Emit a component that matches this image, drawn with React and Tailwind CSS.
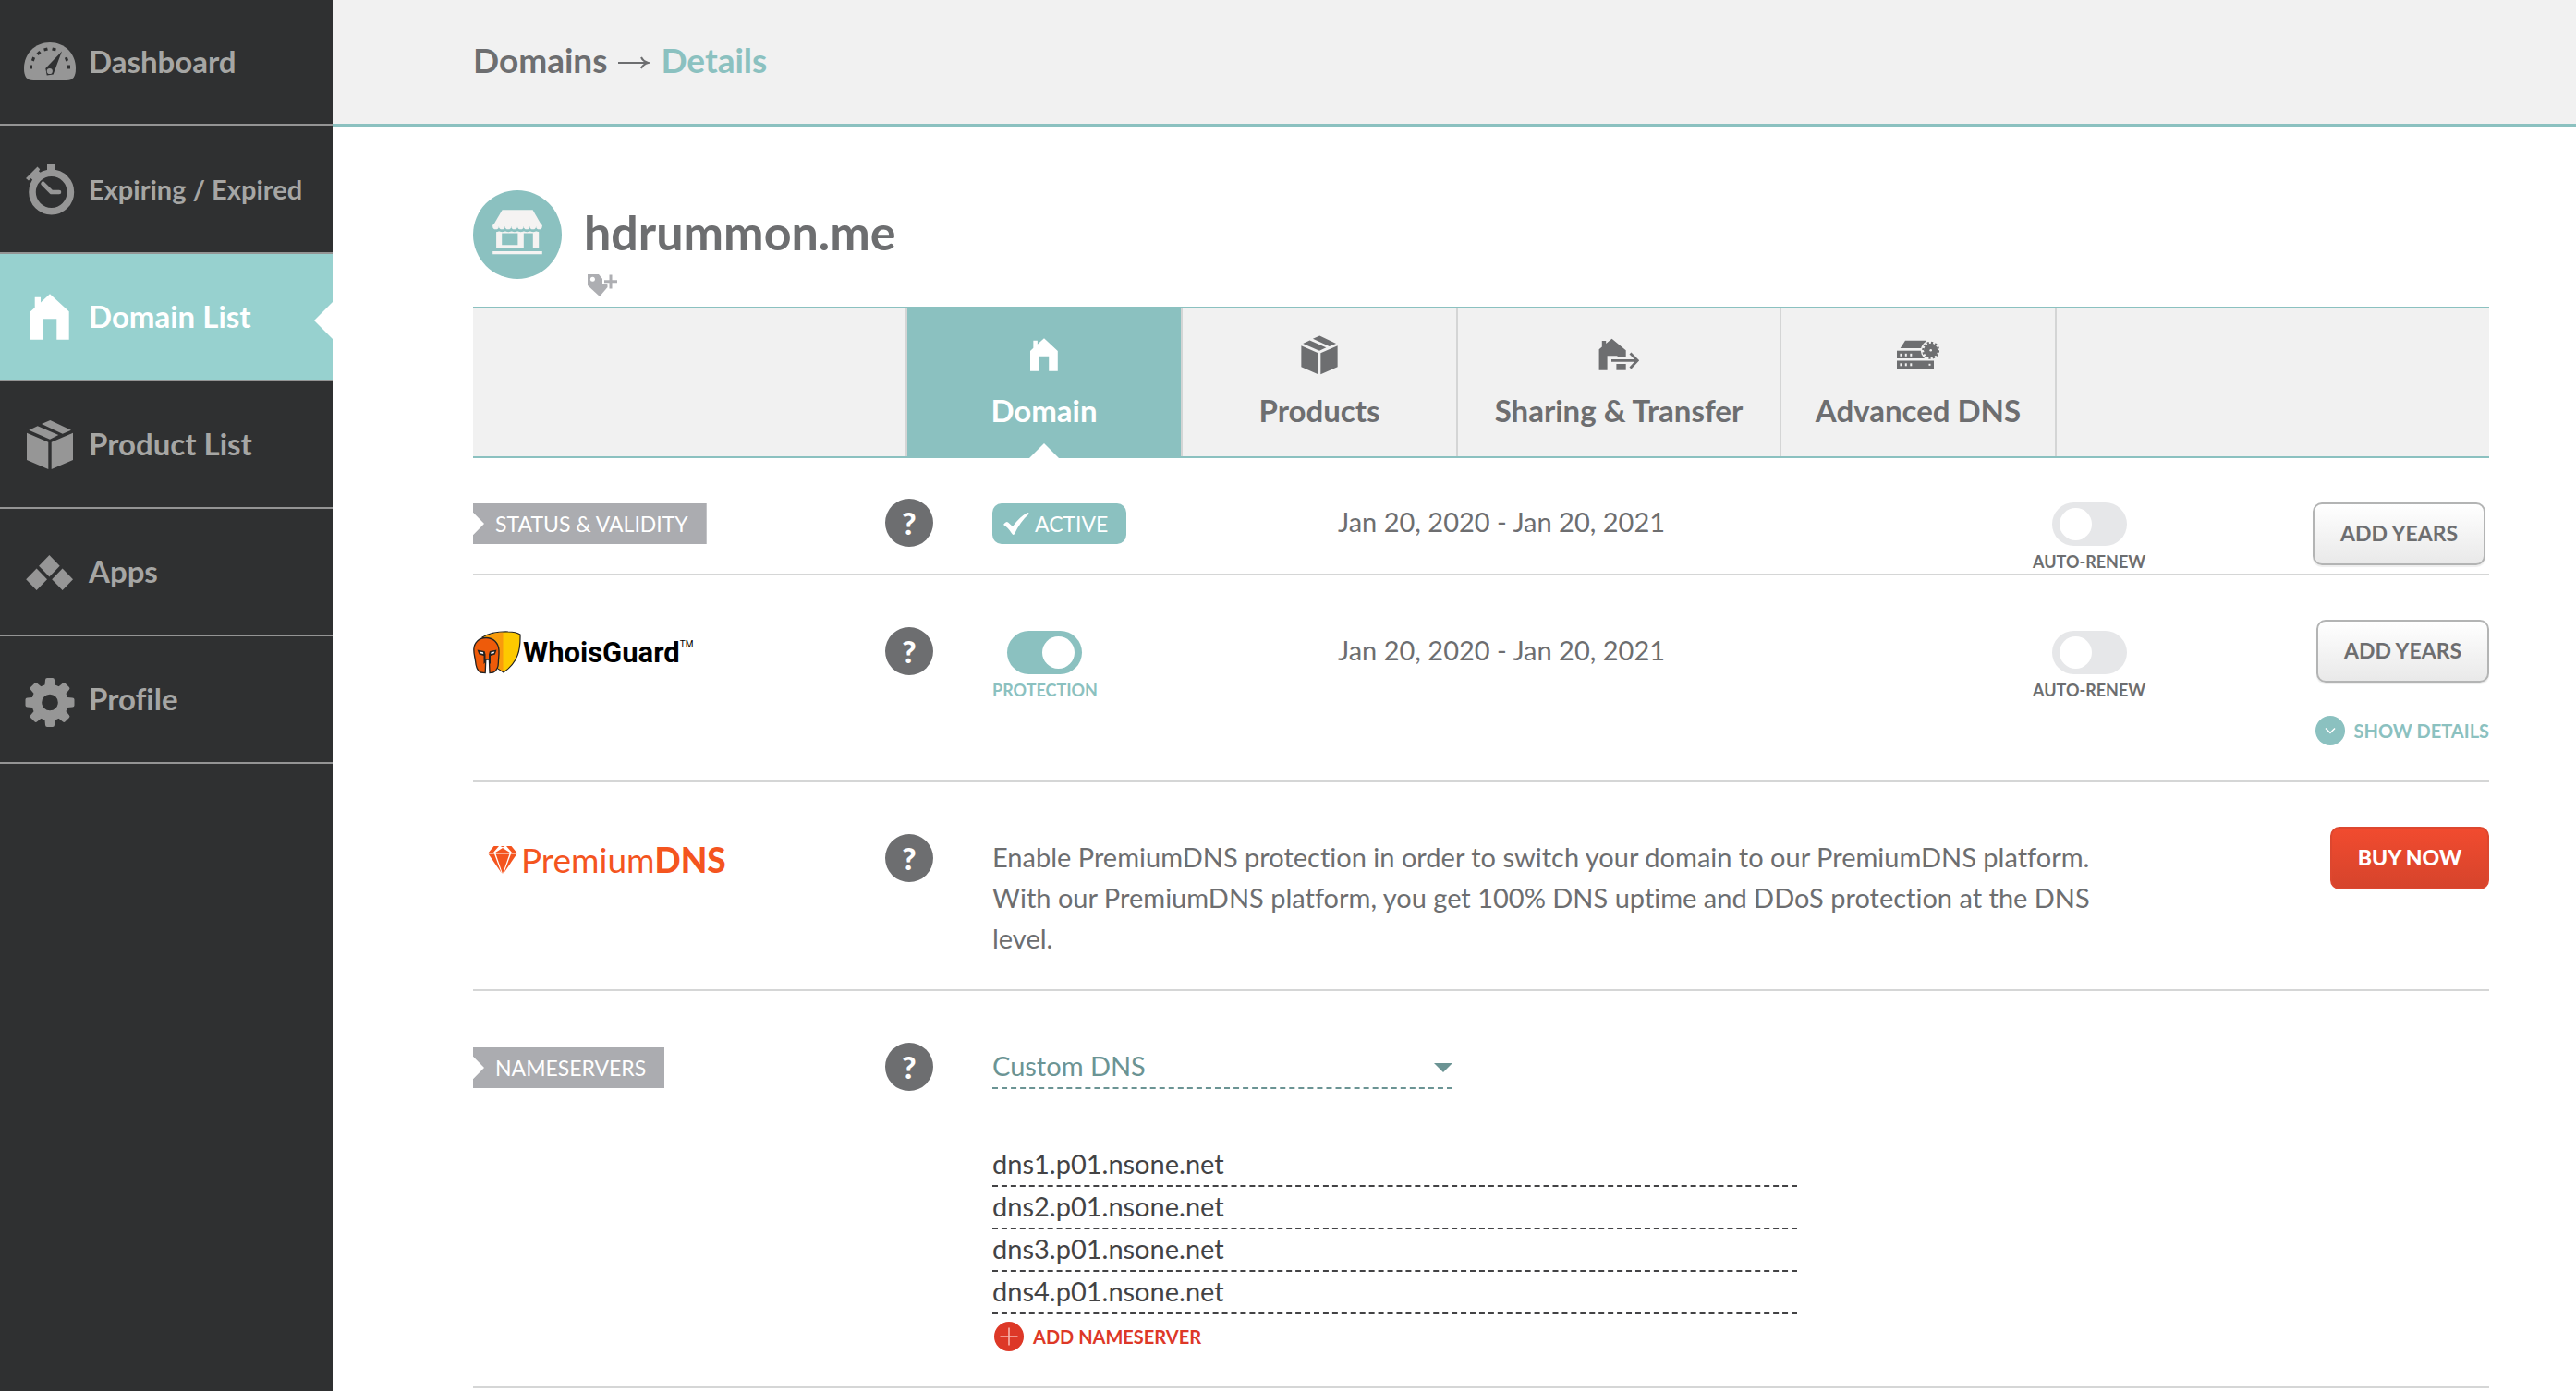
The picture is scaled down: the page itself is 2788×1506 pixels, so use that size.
import React, { useState } from "react";

function DashboardIcon() {
  const ticks = [
    [7.5, 33.5, 0],
    [10, 25, 20],
    [16, 18.5, 45],
    [23.5, 14.5, 75],
    [32.5, 14.5, 105],
    [46, 25, 160],
    [48.5, 33.5, 0],
  ];
  return (
    <svg viewBox="0 0 56 56" className="size-14 shrink-0 overflow-visible" aria-hidden="true">
      <path d="M0 35C0 19 12 7 28 7s28 12 28 28c0 9-3 13-10 13H10C3 48 0 44 0 35Z" fill="currentColor" />
      {ticks.map(([x, y, r]) => (
        <rect key={x} x={x - 1.5} y={y - 2} width="3" height="4" transform={`rotate(${r} ${x} ${y})`} fill="#2f3031" />
      ))}
      <path d="M41 16.5 33.3 37l-1.6 4.5-7 1-1.4-7.5Z" fill="#2f3031" />
      <circle cx="27.8" cy="38" r="3.1" fill="currentColor" />
    </svg>
  );
}

function StopwatchIcon() {
  return (
    <svg viewBox="0 0 56 56" className="size-14 shrink-0 overflow-visible" aria-hidden="true">
      <circle cx="29.7" cy="31" r="20.7" fill="none" stroke="currentColor" strokeWidth="7.6" />
      <path d="M25 1h9v9h-9Z" fill="currentColor" />
      <path d="M2 16 14.5 3.5l2.7 2.7-1.2 2.3 4 3-9 8L7.5 16 5 18.5Z" fill="currentColor" />
      <path d="M20.5 21.8 29.7 31H38" fill="none" stroke="currentColor" strokeWidth="4.6" strokeLinecap="round" strokeLinejoin="round" />
    </svg>
  );
}

function HomeIcon({ className }) {
  return (
    <svg viewBox="0 0 56 56" className={className} aria-hidden="true">
      <path d="M28 3.3 48.7 22.3V52.7H35.3V30.3H20.7V52.7H7V22.3L11.7 18V6.7H18V12.4Z" fill="currentColor" />
    </svg>
  );
}

function BoxIcon({ className }) {
  return (
    <svg viewBox="0 2 56 56" className={className} aria-hidden="true">
      <g fill="currentColor">
        <path d="M3 17.7 26.3 27.7V57L3 47Z" />
        <path d="M53 17.7 29.7 27.7V57L53 47Z" />
        <path d="M5.3 14.7 14.7 10.3 37.3 20 28 24.7Z" />
        <path d="M19 8 28.3 4 51 14.7 41.7 18.7Z" />
      </g>
    </svg>
  );
}

function AppsIcon() {
  return (
    <svg viewBox="0 0 56 56" className="size-14 shrink-0" aria-hidden="true">
      <g fill="currentColor">
        <path d="M27.4 10 38.7 21.7 27.4 33.4 16.1 21.7Z" />
        <path d="M13.6 24.6 25 36.3 13.6 48 2.2 36.3Z" />
        <path d="M41.6 24.6 53 36.3 41.6 48 30.2 36.3Z" />
      </g>
    </svg>
  );
}

function GearIcon() {
  return (
    <svg viewBox="0 -3.5 56 56" className="size-14 shrink-0 overflow-visible" aria-hidden="true">
      <circle cx="28" cy="28" r="14.3" fill="none" stroke="currentColor" strokeWidth="11" />
      {[0, 45, 90, 135, 180, 225, 270, 315].map((a) => (
        <path key={a} d="M20.5 12 22.5 9 23 3.5Q23.2 1.5 25 1.5H31Q32.8 1.5 33 3.5L33.5 9 35.5 12Z" fill="currentColor" transform={`rotate(${a} 28 28)`} />
      ))}
    </svg>
  );
}

function ShareIcon() {
  return (
    <svg viewBox="0 0 44 44" className="size-11" aria-hidden="true">
      <path d="M14.5 4.7 29.7 17.3V25H20.5V23.3H9.6V38.7H.6V16.3L3.8 13.6V7H8.2V10Z" fill="currentColor" />
      <path d="M19.4 32H29.7V38.7H19.4Z" fill="currentColor" />
      <path d="M14 28.3H42M34.5 20.5 42.3 28.3 34.5 36.5" fill="none" stroke="currentColor" strokeWidth="2.8" />
    </svg>
  );
}

function ServerIcon() {
  return (
    <svg viewBox="0 0 46 44" className="h-11 w-[46px]" aria-hidden="true">
      <g fill="currentColor">
        <path d="M3.7 15 9 6.7H31V15Z" />
        <path d="M0 17.7H30V26H0Z" />
        <path d="M0 28.5H40V37H0Z" />
      </g>
      <circle cx="36.7" cy="17.3" r="10.8" fill="#f1f1f1" />
      <circle cx="36.7" cy="17.3" r="7.6" fill="currentColor" />
      <circle cx="36.7" cy="17.3" r="8.3" fill="none" stroke="currentColor" strokeWidth="2.4" strokeDasharray="2.2 2.146" />
      <g fill="#f1f1f1">
        <circle cx="36.7" cy="17.3" r="1.3" />
        {[3.4, 8.8, 14.3].map((x) => (
          <g key={x}>
            <rect x={x} y="20.8" width="2" height="3" />
            <rect x={x} y="31.3" width="2" height="3" />
          </g>
        ))}
        <rect x="34.5" y="31.8" width="2" height="2" />
      </g>
    </svg>
  );
}

function StoreBadge() {
  const scallops = [0, 1, 2, 3, 4, 5, 6, 7];
  return (
    <svg viewBox="0 0 96 96" className="size-24 shrink-0" aria-hidden="true">
      <circle cx="48" cy="48" r="48" fill="#8bc1c0" />
      <g fill="#f5f3f2">
        <path d="M31.6 21.3H64.6L74.8 39H21.2Z" />
        {scallops.map((i) => (
          <circle key={i} cx={24.55 + i * 6.7} cy="39" r="3.35" />
        ))}
        <path fillRule="evenodd" d="M25.1 44.5H71.2V62.7H64.8V46.5H54.8V62.7H25.1ZM31.2 46.5V59.3H48.4V46.5Z" />
        <path d="M21.2 66H74.8V69.3H21.2Z" />
      </g>
      <path d="M21.5 42.5q3.35 4 6.7 0q3.35 4 6.7 0q3.35 4 6.7 0q3.35 4 6.7 0q3.35 4 6.7 0q3.35 4 6.7 0q3.35 4 6.7 0q3.35 4 6.7 0" fill="none" stroke="#8bc1c0" strokeWidth="1.3" />
    </svg>
  );
}

function TagPlusIcon() {
  return (
    <svg viewBox="0 0 32 24" className="h-6 w-8" aria-hidden="true">
      <path d="M0 0H12L21.5 11.5V14L13 24 0 12Z" fill="#adaeb2" />
      <circle cx="5.4" cy="5.2" r="2.5" fill="#fff" />
      <path d="M16 7.8H32M25 0V18" stroke="#fff" strokeWidth="6" />
      <path d="M18 7.8H32M25 .5V15.5" stroke="#adaeb2" strokeWidth="3" />
    </svg>
  );
}

function GuardShield() {
  return (
    <svg viewBox="0 0 54 48" className="h-12 w-[54px] shrink-0" aria-hidden="true">
      <path d="M10 7C18 2 30 .8 38 1c6 0 10 1 13 3 .4 16-2 30-18 41L20 36Z" fill="#fdc900" stroke="#222" strokeWidth="1.2" />
      <path d="M11 7.5C18 3 26 1.6 32.5 1.7V44L20 36Z" fill="#f99b0c" />
      <path d="M14 7.5C22 7.5 27.5 13 28 21c.3 6-.6 9-.6 13 0 5-1.6 9-5.4 11l-4 .6-.6-14.6h-3.6L13.2 45.600 8 45C3.6 42.5 3 38 2.6 33 2 28 .8 26 .8 20 1.2 12.5 6.5 7.5 14 7.5Z" fill="#ee5b0a" stroke="#222" strokeWidth="1.3" />
      <path d="M4.5 20.5 12.5 22 13.5 25.5V34L11.5 36V27L6.5 25.5ZM25.5 20.5 18 22 17 25.5V34L19 36V27L23.8 25.5Z" fill="#222" />
      <path d="M7 22.6 11 23.3 11.2 25 8 24.3ZM23.3 22.6 19.5 23.3 19.3 25 22.5 24.3Z" fill="#fff" />
    </svg>
  );
}

function DiamondIcon() {
  return (
    <svg viewBox="0 0 32 31" className="h-8 w-8 shrink-0" aria-hidden="true">
      <g fill="#f4551f">
        <path d="M6.5.5H12L6 7.5H.8Z" />
        <path d="M25.5.5H20L26 7.5H31.2Z" />
        <path d="M13.5.5H18.5L16 1.8ZM16 2.6 23.8 7.5H8.2Z" />
        <path d="M.6 9H7L14.6 29.5Z" />
        <path d="M31.4 9H25L17.4 29.5Z" />
        <path d="M8.6 9H23.4L16 30.5Z" />
      </g>
    </svg>
  );
}

const navItems = [
  { label: "Dashboard", icon: <DashboardIcon />, box: "h-[136px] text-[33px]" },
  { label: "Expiring / Expired", icon: <StopwatchIcon />, box: "h-[139px] text-[29px]" },
  { label: "Domain List", icon: <HomeIcon className="size-14 shrink-0" />, box: "h-[138px] text-[33px]", active: true },
  { label: "Product List", icon: <BoxIcon className="size-14 shrink-0" />, box: "h-[138px] text-[33px]" },
  { label: "Apps", icon: <AppsIcon />, box: "h-[138px] text-[33px]" },
  { label: "Profile", icon: <GearIcon />, box: "h-[138px] text-[33px]" },
];

function Sidebar() {
  return (
    <nav className="w-[360px] shrink-0 bg-[#2f3031]" aria-label="Main">
      {navItems.map((item) => (
        <a
          key={item.label}
          href="#"
          className={`relative flex items-center gap-3.5 border-b-2 border-[#949494] pl-[26px] font-bold ${item.box} ${
            item.active ? "bg-[#97d1cf] text-white" : "text-[#969696]"
          }`}
        >
          {item.icon}
          <span className={`${item.active ? "text-white" : "text-[#a6a6a4]"}`}>{item.label}</span>
          {item.active && (
            <span className="absolute top-[52px] right-0 h-10 w-5 bg-white [clip-path:polygon(100%_0,0_50%,100%_100%)]" />
          )}
        </a>
      ))}
    </nav>
  );
}

const tabs = [
  { label: "Domain", icon: <HomeIcon className="size-10" />, width: "w-[298px]", active: true },
  { label: "Products", icon: <BoxIcon className="size-11" />, width: "w-[298px]" },
  { label: "Sharing & Transfer", icon: <ShareIcon />, width: "w-[350px]" },
  { label: "Advanced DNS", icon: <ServerIcon />, width: "w-[298px]" },
];

function Tabs() {
  return (
    <div role="tablist" className="flex justify-center border-y-2 border-[#8bc1c0] bg-[#f1f1f1]">
      <div className="flex border-l-2 border-[#d4d5d5]">
        {tabs.map((tab) => (
          <button
            key={tab.label}
            type="button"
            role="tab"
            aria-selected={!!tab.active}
            className={`relative flex h-40 flex-col items-center border-r-2 border-[#d4d5d5] pt-7 text-[33px] leading-10 font-bold whitespace-nowrap ${tab.width} ${
              tab.active ? "bg-[#8bc1c0] text-white" : "text-[#6d6e70]"
            }`}
          >
            <span className="flex h-11 items-center">{tab.icon}</span>
            <span className="mt-[18px]">{tab.label}</span>
            {tab.active && (
              <span className="absolute -bottom-0.5 left-1/2 h-4 w-8 -translate-x-1/2 bg-white [clip-path:polygon(50%_0,100%_100%,0_100%)]" />
            )}
          </button>
        ))}
      </div>
    </div>
  );
}

function Row({ children, className }) {
  return (
    <section
      className={`grid grid-cols-[446px_116px_374px_1fr_120px_374px] items-start border-b-2 border-[#d5d6d6] ${className}`}
    >
      {children}
    </section>
  );
}

function SectionTag({ children }) {
  return (
    <h2 className="mt-[13px] w-fit bg-[#abacb0] pr-5 pl-6 text-[23px] leading-[44px] text-white [clip-path:polygon(0_0,100%_0,100%_100%,0_100%,0_78%,12px_50%,0_22%)]">
      {children}
    </h2>
  );
}

function HelpButton({ topic }) {
  return (
    <button
      type="button"
      aria-label={`Help: ${topic}`}
      className="mt-2 size-[52px] rounded-full bg-[#6d6e70] text-[33px] leading-[52px] font-black text-white"
    >
      ?
    </button>
  );
}

function Toggle({ label, initial = false, tone = "text-[#6d6e70]" }) {
  const [on, setOn] = useState(initial);
  return (
    <label className="mt-3 flex w-fit flex-col items-center gap-1.5">
      <input
        type="checkbox"
        checked={on}
        onChange={() => setOn(!on)}
        className="h-[47px] w-[81px] appearance-none rounded-full bg-[#e6e7e9] px-2 py-1.5 before:block before:size-[35px] before:rounded-full before:bg-white checked:bg-[#8bc1c0] checked:before:ml-auto"
      />
      <span className={`text-[18px] leading-[22px] font-bold whitespace-nowrap ${tone}`}>{label}</span>
    </label>
  );
}

function AddYearsButton({ className = "" }) {
  return (
    <button
      type="button"
      className={`h-[68px] w-[187px] rounded-[10px] border-2 border-[#b3b4b4] bg-linear-to-b from-white to-[#e9e9e9] pb-px text-[23px] font-bold text-[#6d6e70] shadow-[0_2px_1px_#eeeeee] ${className}`}
    >
      ADD YEARS
    </button>
  );
}

const nameservers = ["dns1.p01.nsone.net", "dns2.p01.nsone.net", "dns3.p01.nsone.net", "dns4.p01.nsone.net"];

export default function App() {
  return (
    <div className="flex min-h-screen bg-white font-['Lato',sans-serif] text-[#6d6e70] [font-variant-ligatures:none]">
      <Sidebar />
      <div className="min-w-0 flex-1">
        <header className="border-b-4 border-[#8bc1c0] bg-[#f1f1f1]">
          <nav aria-label="Breadcrumb" className="flex h-[134px] items-center gap-3 pb-1 pl-[152px] text-[37px] font-bold">
            <a href="#">Domains</a>
            <svg viewBox="0 0 34 14" className="mt-1.5 h-3.5 w-[34px]" aria-hidden="true">
              <path d="M0 7H32M25 1Q27 5.5 32.5 7 27 8.5 25 13" fill="none" stroke="currentColor" strokeWidth="2" />
            </svg>
            <span className="text-[#8bc1c0]">Details</span>
          </nav>
        </header>

        <main className="pt-[68px] pr-[94px] pl-[152px]">
          <div className="flex gap-6 pb-[11px]">
            <StoreBadge />
            <div className="pt-[15px]">
              <h1 className="text-[52px] leading-[60px] font-bold">hdrummon.me</h1>
              <button type="button" aria-label="Add tag" className="mt-4 ml-1 block">
                <TagPlusIcon />
              </button>
            </div>
          </div>

          <Tabs />

          <Row className="pt-9 pb-0.5">
            <SectionTag>STATUS &amp; VALIDITY</SectionTag>
            <HelpButton topic="Status and validity" />
            <div className="mt-[13px] flex w-[145px] items-center gap-1.5 rounded-[10px] bg-[#8bc1c0] pl-3 text-[23px] leading-[44px] text-white">
              <svg viewBox="0 0 28 24" className="h-6 w-7" aria-hidden="true">
                <path d="M0 13Q3 9 5 10.5L10 15Q17 5 26 0 28 0 27.5 1.5 18 10 12 23 10.5 25 9 22.5 5 16 0 13Z" fill="#fff" />
              </svg>
              ACTIVE
            </div>
            <p className="mt-[11px] text-[29px] leading-[44px]">Jan 20, 2020 - Jan 20, 2021</p>
            <Toggle label="AUTO-RENEW" />
            <AddYearsButton className="mt-3 mr-1 justify-self-end" />
          </Row>

          <Row className="pt-12 pb-[38px]">
            <div className="mt-3 flex items-center">
              <GuardShield />
              <span className="flex items-start font-['Roboto',sans-serif] text-[31px] leading-[46px] font-bold text-black">
                WhoisGuard<span className="pt-1 text-[10px] leading-[20px] font-normal">TM</span>
              </span>
            </div>
            <HelpButton topic="WhoisGuard" />
            <Toggle label="PROTECTION" initial tone="text-[#8bc1c0]" />
            <p className="mt-[11px] text-[29px] leading-[44px]">Jan 20, 2020 - Jan 20, 2021</p>
            <Toggle label="AUTO-RENEW" />
            <div className="flex flex-col items-end">
              <AddYearsButton />
              <button type="button" className="mt-9 flex items-center gap-2.5 text-[20px] leading-8 font-bold text-[#8bc1c0]">
                <svg viewBox="0 0 32 32" className="size-8" aria-hidden="true">
                  <circle cx="16" cy="16" r="16" fill="#8bc1c0" />
                  <path d="M11 13.5 16 18.5 21 13.5" fill="none" stroke="#fff" strokeWidth="1.5" />
                </svg>
                SHOW DETAILS
              </button>
            </div>
          </Row>

          <Row className="pt-12 pb-[33px]">
            <div className="mt-3.5 flex items-center gap-1 pl-4 text-[37px] leading-[44px] text-[#f4551f]">
              <DiamondIcon />
              <span>
                Premium<b className="font-black">DNS</b>
              </span>
            </div>
            <HelpButton topic="PremiumDNS" />
            <p className="col-span-3 mt-[11px] max-w-[1220px] text-[29px] leading-[44px]">
              Enable PremiumDNS protection in order to switch your domain to our PremiumDNS platform. With our PremiumDNS
              platform, you get 100% DNS uptime and DDoS protection at the DNS level.
            </p>
            <button
              type="button"
              className="h-[68px] w-[172px] justify-self-end rounded-[10px] border-2 border-[#dd472f] bg-linear-to-b from-[#f14b2f] to-[#d6442c] pb-px text-[23px] font-black text-white"
            >
              BUY NOW
            </button>
          </Row>

          <Row className="pt-12 pb-[38px]">
            <SectionTag>NAMESERVERS</SectionTag>
            <HelpButton topic="Nameservers" />
            <div className="col-span-4 mt-2.5 flex flex-col items-start">
              <div className="relative w-full max-w-[498px] text-[#6b9494]">
                <select
                  aria-label="Nameserver type"
                  className="block h-12 w-full appearance-none border-b-2 border-dashed border-[#6b9494] bg-transparent text-[29px] leading-[44px]"
                >
                  <option>Custom DNS</option>
                </select>
                <span className="pointer-events-none absolute top-5 right-0 h-2.5 w-5 bg-[#6b9494] [clip-path:polygon(0_0,100%_0,50%_100%)]" />
              </div>
              <div className="mt-[60px] w-full max-w-[871px]">
                {nameservers.map((ns, i) => (
                  <input
                    key={ns}
                    type="text"
                    aria-label={`Nameserver ${i + 1}`}
                    defaultValue={ns}
                    className="block h-[46px] w-full border-b-2 border-dashed border-[#434345] pb-1 text-[29px] text-[#434345]"
                  />
                ))}
              </div>
              <button type="button" className="mt-2 flex items-center gap-2.5 pl-0.5 text-[20px] leading-8 font-bold text-[#dd3827]">
                <svg viewBox="0 0 32 32" className="size-8" aria-hidden="true">
                  <circle cx="16" cy="16" r="16" fill="#dd3827" />
                  <path d="M6.5 16H25.5M16 6.5V25.5" stroke="#f7b5ae" strokeWidth="1.6" />
                </svg>
                ADD NAMESERVER
              </button>
            </div>
          </Row>
        </main>
      </div>
    </div>
  );
}
